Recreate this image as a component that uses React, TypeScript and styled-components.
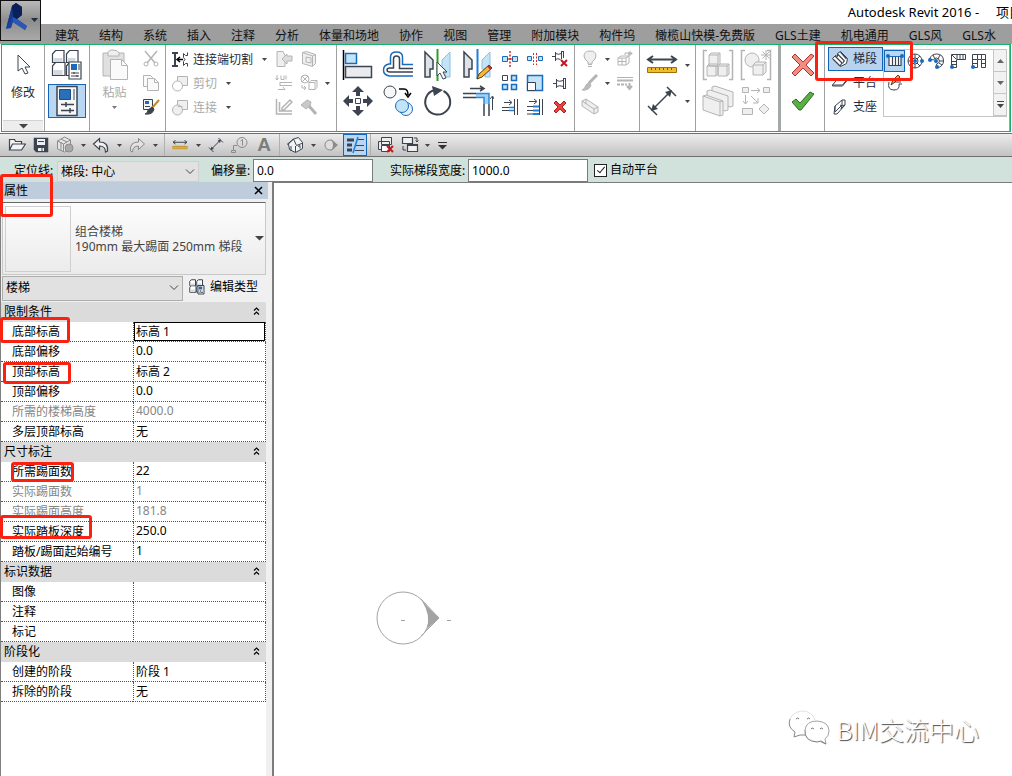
import React from "react";
import styled, { createGlobalStyle, css } from "styled-components";

const DARK = "#3b4450";
const BLUE = "#1b6bbd";
const PALE = "#c3e4f6";
const GREY = "#b4b4b4";
const FAINT = "#efefef";

const GlobalStyle = createGlobalStyle`
  *, *::before, *::after { box-sizing: border-box; }
  body {
    margin: 0;
    background: #fff;
    color: #000;
    font: 12px/16px "Noto Sans", "Noto Sans CJK SC", sans-serif;
  }
  button, input, select { font: inherit; color: inherit; margin: 0; }
`;

const Window = styled.div`
  position: relative;
  display: flex;
  flex-direction: column;
  min-height: 100vh;
  overflow: hidden;
`;

/* ---------- title and tabs ---------- */

const TitleBar = styled.header`
  display: flex;
  justify-content: flex-end;
  height: 24px;
  padding-top: 4px;
  overflow: hidden;
  white-space: pre;
`;

const Title = styled.h1`
  margin: 0 -10px 0 0;
  font-size: 13px;
  line-height: 16px;
  font-weight: 400;
  flex: none;
`;

const AppButton = styled.button`
  position: absolute;
  left: 0;
  top: 0;
  z-index: 2;
  width: 41px;
  height: 41px;
  padding: 0;
  border: 1px solid #111;
  background: linear-gradient(#b9b9b9, #8d8d8d 50%, #a9a9a9);
`;

const Tabs = styled.nav`
  display: flex;
  gap: 20px;
  height: 20px;
  padding: 4px 0 0 55px;
  background: #9e9e9e;
  white-space: nowrap;
  overflow: hidden;
`;

const Tab = styled.a`
  flex: none;
  color: #111;
  text-decoration: none;
`;

/* ---------- ribbon ---------- */

const Ribbon = styled.section`
  display: flex;
  height: 88px;
  margin: 0 1px 1px;
  border: 1px solid #17b06a;
`;

const Panel = styled.div<{ $w?: number; $thick?: boolean }>`
  display: flex;
  align-items: flex-start;
  padding-top: 2px;
  border-right: ${(p) => (p.$thick ? "3px solid #a3a9a6" : "1px solid #a0a0a0")};
  ${(p) => (p.$w ? css`flex: none; width: ${p.$w}px;` : css`flex: 1;`)}
`;

const Column = styled.div<{ $w?: number; $inset?: number }>`
  display: flex;
  flex-direction: column;
  flex: none;
  padding-left: ${(p) => p.$inset ?? 0}px;
  ${(p) => p.$w && css`width: ${p.$w}px;`}
`;

const Row = styled.div`
  display: flex;
  height: 24px;
`;

const Tool = styled.button<{ $w?: number; $h?: number; $on?: boolean }>`
  display: flex;
  align-items: center;
  justify-content: center;
  flex: none;
  width: ${(p) => p.$w ?? 24}px;
  height: ${(p) => p.$h ?? 24}px;
  padding: 0;
  border: ${(p) => (p.$on ? "1px solid #1464b8" : "0")};
  background: ${(p) => (p.$on ? "#b9d6f2" : "transparent")};
`;

const SheetButton = styled(Tool)`
  margin: 1px 3px 0;
`;

const WideTool = styled.button<{ $w?: number; $on?: boolean; $off?: boolean }>`
  display: flex;
  align-items: center;
  flex: none;
  gap: 4px;
  width: ${(p) => p.$w ?? 84}px;
  height: 24px;
  padding: 1px 0 0;
  border: 0;
  color: ${(p) => (p.$off ? "#a9a9a9" : "#1e2a38")};
  background: transparent;
  white-space: nowrap;
`;

const StairTool = styled(WideTool)`
  padding: 0 0 0 2px;
  border: 1px solid ${(p) => (p.$on ? "#1464b8" : "transparent")};
  background: ${(p) => (p.$on ? "#b9d2ee" : "transparent")};
`;

const BigTool = styled.button<{ $off?: boolean; $w: number }>`
  display: flex;
  flex-direction: column;
  align-items: center;
  gap: 4px;
  width: ${(p) => p.$w}px;
  height: 72px;
  padding: 2px 0 0;
  border: 0;
  background: transparent;
  color: ${(p) => (p.$off ? "#a9a9a9" : "#1e2a38")};
`;

const PanelFoot = styled.button`
  display: flex;
  align-items: center;
  justify-content: center;
  width: 40px;
  height: 11px;
  margin: 1px 0 0 1px;
  padding: 0;
  border: 0;
  border-top: 1px solid #d2d2d2;
  background: #ededed;
`;

const LargeGrid = styled.div<{ $w: number; $inset?: number }>`
  display: grid;
  padding-left: ${(p) => p.$inset ?? 0}px;
  grid-auto-flow: column;
  grid-template-rows: 36px 36px;
  grid-auto-columns: ${(p) => p.$w}px;
`;

const SmallGrid = styled.div<{ $w: number }>`
  display: grid;
  grid-auto-flow: column;
  grid-template-rows: 24px 24px 24px;
  grid-auto-columns: ${(p) => p.$w}px;
`;

const GeometryTools = styled(Column)`
  width: 106px;
  padding-left: 5px;
`;

const Gallery = styled.div`
  display: flex;
  width: 124px;
  height: 68px;
  margin: 2px 0 0;
  border: 1px solid #c6c6c6;
`;

const GalleryItems = styled.div`
  display: flex;
  flex-wrap: wrap;
  align-content: flex-start;
  flex: 1;
`;

const GalleryScroll = styled.div`
  display: flex;
  flex-direction: column;
  width: 13px;
`;

const ScrollButton = styled.button`
  display: flex;
  align-items: center;
  justify-content: center;
  flex: 1;
  padding: 0;
  border: 0;
  border-left: 1px solid #c6c6c6;
  border-bottom: 1px solid #c6c6c6;
  background: #f2f2f2;
`;

/* ---------- quick access and options ---------- */

const QuickBar = styled.div`
  display: flex;
  align-items: center;
  height: 24px;
  padding-left: 5px;
  border-top: 1px solid #6f6f6f;
  border-bottom: 1px solid #6f6f6f;
  background: linear-gradient(#ececec, #c2c2c2);
`;

const Divider = styled.span`
  width: 1px;
  height: 22px;
  margin: 0 3px;
  background: #b0b0b0;
`;

const LetterA = styled.span`
  font: 700 19px/20px "Liberation Sans", sans-serif;
  color: #7d7d7d;
`;

const OptionsBar = styled.form`
  display: flex;
  align-items: flex-end;
  height: 25px;
  padding-left: 14px;
  background: #d1e1db;
  white-space: nowrap;
`;

const OptionLabel = styled.label<{ $w: number }>`
  flex: none;
  width: ${(p) => p.$w}px;
  height: 19px;
`;

const Spacer = styled.span<{ $w: number }>`
  flex: none;
  width: ${(p) => p.$w}px;
`;

const NumberBox = styled.input`
  flex: none;
  width: 120px;
  height: 23px;
  padding: 0 3px;
  border: 1px solid #7a7a7a;
  background: #fff;
`;

const SelectBox = styled.span<{ $w: number; $h: number; $edge: string }>`
  display: grid;
  flex: none;
  align-items: center;
  width: ${(p) => p.$w}px;
  height: ${(p) => p.$h}px;
  border: 1px solid ${(p) => p.$edge};
  background: #e1e1e1;
  & > * { grid-area: 1 / 1; }
  select {
    appearance: none;
    width: 100%;
    padding: 0 3px;
    border: 0;
    background: transparent;
    outline: 0;
  }
  svg { justify-self: end; margin-right: 3px; pointer-events: none; }
`;

const CheckLabel = styled.label`
  display: flex;
  align-items: center;
  gap: 3px;
  height: 24px;
  margin-left: 6px;
`;

const CheckBox = styled.input`
  appearance: none;
  width: 13px;
  height: 13px;
  border: 1px solid #222;
  background: #fff;
  &:checked::before {
    content: "";
    display: block;
    width: 4px;
    height: 8px;
    margin: 0 0 0 4px;
    border: solid #222;
    border-width: 0 1px 1px 0;
    transform: rotate(40deg);
  }
`;

/* ---------- properties palette ---------- */

const Workspace = styled.main`
  display: flex;
  flex: 1;
`;

const Palette = styled.aside`
  flex: none;
  width: 272px;
  padding-right: 4px;
  border-left: 1px solid #7f7f7f;
  background: #f0f0f0;
  display: flex;
  flex-direction: column;
`;

const PaletteHead = styled.div`
  display: flex;
  justify-content: space-between;
  align-items: center;
  height: 17px;
  padding: 0 3px;
  background: #bfccdb;
`;

const PaletteTitle = styled.h2`
  margin: 0;
  font-size: 12px;
  line-height: 16px;
  font-weight: 400;
`;

const CloseButton = styled.button`
  padding: 0;
  border: 0;
  margin-right: 2px;
  background: transparent;
  line-height: 0;
`;

const TypeSelector = styled.button`
  display: flex;
  align-items: center;
  height: 73px;
  margin: 3px 2px 0 1px;
  padding: 0 1px 0 2px;
  border: 1px solid #c8c8c8;
  border-top: 1px solid #666;
  background: linear-gradient(#fdfdfd, #ebebeb);
  text-align: left;
  color: #444;
`;

const Thumb = styled.span`
  width: 66px;
  height: 66px;
  margin-right: 4px;
  border: 1px solid #cfcfcf;
`;

const TypeName = styled.span`
  flex: 1;
  white-space: nowrap;
  line-height: 15px;
`;

const FilterRow = styled.div`
  display: flex;
  align-items: center;
  gap: 6px;
  height: 27px;
  padding: 0 0 1px 1px;
`;

const EditType = styled.button`
  display: flex;
  align-items: center;
  gap: 5px;
  height: 24px;
  padding: 0 0 2px;
  border: 0;
  background: transparent;
  white-space: nowrap;
`;

const Sheet = styled.div`
  flex: 1;
  margin-right: 2px;
  background: #fff;
`;

const Props = styled.table`
  width: 100%;
  border-spacing: 0;
  table-layout: fixed;
`;

const GroupHead = styled.th`
  height: 20px;
  padding: 0 6px 0 3px;
  background: #dbdbdb;
  text-align: left;
  font-weight: 400;
  line-height: 18px;
  div { display: flex; justify-content: space-between; align-items: center; }
  button { padding: 0 0 2px; border: 0; background: transparent; line-height: 0; }
`;

const Name = styled.th<{ $off?: boolean }>`
  height: 20px;
  padding: 0 0 0 11px;
  border-bottom: 1px dotted #555;
  text-align: left;
  font-weight: 400;
  line-height: 18px;
  white-space: nowrap;
  color: ${(p) => (p.$off ? "#858585" : "#000")};
`;

const Value = styled.td`
  height: 20px;
  padding: 0;
  border: dotted #555;
  border-width: 0 1px 1px 1px;
`;

const ValueBox = styled.input<{ $focus?: boolean }>`
  display: block;
  width: 100%;
  height: 19px;
  padding: 0 1px 2px;
  border: 1px solid ${(p) => (p.$focus ? "#000" : "transparent")};
  background: transparent;
  outline: 0;
  &:disabled { color: #858585; }
`;

/* ---------- canvas ---------- */

const Canvas = styled.section`
  position: relative;
  flex: 1;
  border-left: 2px solid #7c7c7c;
  border-top: 1px solid #7c7c7c;
  background: #fff;
`;

const Elevation = styled.svg`
  position: absolute;
  left: 101px;
  top: 406px;
`;

const Watermark = styled.div`
  position: absolute;
  right: 33px;
  bottom: 28px;
  display: flex;
  align-items: center;
  gap: 6px;
  font-family: "Noto Sans CJK SC", sans-serif;
  font-size: 25px;
  line-height: 36px;
  font-weight: 300;
  color: #fff;
  text-shadow: 1px 1px 1px #444;
  white-space: nowrap;
`;

const Mark = styled.span<{ $x: number; $y: number; $w: number; $h: number }>`
  position: absolute;
  z-index: 3;
  left: ${(p) => p.$x}px;
  top: ${(p) => p.$y}px;
  width: ${(p) => p.$w}px;
  height: ${(p) => p.$h}px;
  border: 3px solid #fc2010;
  border-radius: 3px;
  pointer-events: none;
`;

/* ---------- icons ---------- */

type IconProps = { w?: number; h?: number; c?: string; children: React.ReactNode };
const Icon = ({ w = 18, h = 18, c = DARK, children }: IconProps) => (
  <svg width={w} height={h} viewBox={`0 0 ${w} ${h}`} fill="none" stroke={c} aria-hidden="true">
    {children}
  </svg>
);

const Caret = ({ c = "#444", big = false }: { c?: string; big?: boolean }) => (
  <Icon w={9} h={5} c="none">
    <path d={big ? "M0 0h9L4.500 4.500z" : "M2 1h5L4.500 4z"} fill={c} />
  </Icon>
);

const Chevron = () => (
  <Icon w={10} h={6} c="#444"><path d="M1 .5l4 4 4-4" /></Icon>
);

const Logo = () => (
  <Icon w={39} h={39} c="none">
    <path d="M11 5l4-3 6 4v8l-5 4 10 7-2 4-12-8-2 6-5 1z" fill="#1a43a0" />
    <path d="M11 5l4-3 1 9-5 5-6 12z" fill="#16398f" />
    <path d="M11 5l4-3 6 4v8l-5 4-4-2z" fill="#0b1f58" />
    <path d="M12 16l14 9-2 4-12-8z" fill="#2a58b4" />
    <path d="M30 17h7l-3.500 4z" fill="#222b3a" />
  </Icon>
);

const Arrow = () => (
  <Icon w={24} h={32}>
    <path d="M7 6v16l4-3 3 6 3-1-3-6h5z" fill="#fff" />
  </Icon>
);

const Families = ({ s = 1 }: { s?: number }) => (
  <svg width={32 * s} height={32 * s} viewBox="0 0 32 32" fill="#fff" stroke={DARK} strokeWidth={s < 1 ? 2 : 1.200} aria-hidden="true">
    <path d="M1.500 5l3-3.500H13v12H1.500zM15.500 5l3-3.500H27v12H15.500z" />
    <path d="M1.500 17l3-3.500H14v13H1.500zM15.500 17l3-3.500H22v13h-6.500z" />
    <path d="M2.500 9h9v4h-9zM16.500 9h8v4h-8zM2.500 21h9v5h-9z" fill="#d5d9de" stroke="none" />
    <path d="M18 13h12v17H18z" />
    <path d="M20 15h6v6h-6z" fill={BLUE} stroke="none" />
    <path d="M28 15v6M20 24h8M20 27h8" strokeWidth="1" />
    <path d="M23 23v2M26 26v2" />
  </svg>
);

const PropertySheet = () => (
  <Icon w={28} h={32}>
    <path d="M4 1.500h20v29H4z" fill="#f7f7f7" strokeWidth="1.500" />
    <path d="M6.500 4.500h11v10h-11z" fill="#2a70b8" stroke="#174e8c" />
    <path d="M20 4h2v11h-2z" fill="#9aa3ab" stroke="none" />
    <path d="M8 19.500h13M13 17v5M8 25.500h13M17 23v5" strokeWidth="1.500" />
  </Icon>
);

const Paste = () => (
  <Icon w={28} h={32} c={GREY}>
    <path d="M2 4h21v23H2z" fill="#e0e0e0" />
    <path d="M7 4q0-3 5-3t6 3v3H7z" fill={FAINT} />
    <path d="M9.500 10.500h11l6 6v14h-17z" fill="#fafafa" />
    <path d="M20.500 10.500v6h6" />
  </Icon>
);

const Scissors = () => (
  <Icon c={GREY}>
    <path d="M3 1l10 12M15 1L5 13" strokeWidth="1.500" />
    <circle cx="4" cy="14" r="2" /><circle cx="14" cy="14" r="2" />
  </Icon>
);
const Copy = () => (
  <Icon c={GREY}>
    <path d="M1.500 1.500h7l2 2v9h-9z" fill="#fafafa" />
    <path d="M5.500 4.500h7l4 4v8h-11zM12.500 4.500v4h4" fill="#fafafa" />
  </Icon>
);
const MatchBrush = () => (
  <Icon>
    <path d="M1.500 1.500h9v10h-9z" fill="#f4f4f4" />
    <path d="M3 3h4v3H3z" fill={BLUE} stroke="none" /><path d="M3 8.500h5" />
    <path d="M17 2l-7 8" stroke="#c58b2a" strokeWidth="2" />
    <path d="M10 9l2 2q-1 6-9 5 3-1 3-4z" fill={DARK} />
  </Icon>
);
const Cope = () => (
  <Icon>
    <path d="M1 2h6M1 15h6M4 2v13" strokeWidth="2" />
    <path d="M12 8.500H7M9 6L6 8.500 9 11" stroke="#000" strokeWidth="1.500" />
    <path d="M16.500 1.500v3h-2l-2-2v4l1.500 2-1.500 2v4l2-2h2v3" />
  </Icon>
);
const CutGeo = () => (
  <Icon c={GREY}>
    <path d="M6.500 1.500h10v9h-10z" fill={FAINT} /><circle cx="6.500" cy="11" r="5" fill="#fff" />
  </Icon>
);
const JoinGeo = () => (
  <Icon c={GREY}>
    <path d="M6.500 1.500h10v9h-10z" fill={FAINT} /><circle cx="6.500" cy="11" r="5" fill={FAINT} /><path d="M7 7.500h4.500" />
  </Icon>
);
const JoinRoof = () => (
  <Icon c={GREY}>
    <path d="M2 1.500h6l2 4v11H2z" fill={FAINT} /><path d="M17 6h-5V4L7 9l5 5v-3h5z" fill="#ddd" />
  </Icon>
);
const WallJoin = () => (
  <Icon c={GREY}>
    <path d="M2.500 2.500l4-1 9 3v9l-3 3-10-3z" fill={FAINT} /><path d="M6 7l5 1v5l-5-1zM2.500 2.500l10 3.500v10M12.500 6l3-1.500" />
  </Icon>
);
const Beam = () => (
  <Icon c={GREY}><path d="M2 1v5M.5 4L2 6l1.500-2M6 1.500v4h3v-4M11 1.500v4M5 8.500h12M5 11.500h12M5 8v4M3 15.500h7M8 13l2 2.500" /></Icon>
);
const SplitFace = () => (
  <Icon c={GREY}><circle cx="5" cy="5" r="4" /><path d="M2 2l6 6M2 8l6-6M2 11v3h4M4 12l2 2-2 2M9 8.500l2-2h6v7l-2 2H9zM9 8.500h6v7M15 8.500l2-2" /></Icon>
);
const Paint = () => (
  <Icon c={GREY}><path d="M1.500 1v15H17M4.500 4v9H17M7 10l8-8 2 2-8 8H7z" strokeWidth="1.500" /></Icon>
);
const Hammer = () => (
  <Icon c={GREY}><path d="M1 7l6-5 4 2-1 4-4 3z" fill="#c8c8c8" /><path d="M9 8l7 8" strokeWidth="3" /></Icon>
);

const Align = () => (
  <Icon w={32} h={32}>
    <path d="M1.500 1v30" stroke="#000" strokeWidth="1.500" />
    <path d="M3.500 4.500h11v10h-11z" fill={PALE} stroke={BLUE} strokeWidth="1.500" />
    <path d="M3.500 17.500h26v11h-26z" fill="#e9ebef" strokeWidth="1.500" />
  </Icon>
);
const Offset = () => (
  <Icon w={32} h={32}>
    <path d="M31 15.500H20.500V8q0-5-6-5t-6 5v7H7q-5.500 1-5.500 6t6 6H31" stroke={BLUE} strokeWidth="1.500" />
    <path d="M31 19.500H17.500V10q0-3-3-3t-3 3v9H8q-3 0-3 2t3 2h23" strokeWidth="1.500" />
  </Icon>
);
const MirrorPick = () => (
  <Icon w={32} h={32}>
    <path d="M3 3l8 8v9H8v8H3z" fill="#dfe2e6" strokeWidth="1.500" />
    <path d="M28 3l-8 8v9h3v8h5z" fill={PALE} stroke="#8dbedf" />
    <path d="M15.500 0v32" stroke="#2e9b2e" strokeWidth="2" />
    <path d="M15 13v14l3-3 3 6 3-1-3-6h4z" fill="#fff" />
  </Icon>
);
const MirrorDraw = () => (
  <Icon w={32} h={32}>
    <path d="M2 3l8 8v9H7v8H2z" fill="#dfe2e6" strokeWidth="1.500" />
    <path d="M28 3l-8 8v9h3v8h5z" fill={PALE} stroke="#8dbedf" />
    <path d="M15.500 0v30" stroke="#1d7fd8" strokeWidth="2" />
    <path d="M15 30l2-5 10-9 3 3-10 9z" fill="#f5b63a" stroke="#5b3c0d" />
    <path d="M26 17l3 3" stroke="#b24" strokeWidth="2" />
  </Icon>
);
const Move = () => (
  <Icon w={32} h={32}>
    <path d="M13.500 13.500h5v5h-5z" fill="#fff" />
    <path d="M16 1l6 6h-4v4h-4V7h-4zM16 31l6-6h-4v-4h-4v4h-4zM1 16l6-6v4h4v4H7v4zM31 16l-6-6v4h-4v4h4v4z" fill={DARK} stroke="none" />
  </Icon>
);
const CopyTool = () => (
  <Icon w={32} h={32}>
    <circle cx="8" cy="7" r="6" fill="#f7f7f7" />
    <path d="M17 4h5q4 0 4 6M23 8l3 4 3-4" stroke="#000" strokeWidth="1.500" />
    <circle cx="24" cy="24" r="6.500" fill="#e3f2fb" stroke={BLUE} />
    <circle cx="20" cy="21" r="6.500" fill={PALE} stroke={BLUE} />
  </Icon>
);
const Rotate = () => (
  <Icon w={32} h={32}>
    <path d="M21.500 6a12.500 12.500 0 1 1-9-1" strokeWidth="2" />
    <path d="M10 1l11 4-9 6z" fill={DARK} stroke="none" />
  </Icon>
);
const Trim = () => (
  <Icon w={32} h={32}>
    <path d="M8 3.500h13M18 1l4 2.500L18 6M1 8.500h13M1 12.500h13M22 19v12M27 19v12" strokeWidth="1.500" />
    <path d="M14 8h13v11h-5v-6h-8z" fill="#9fd2f4" stroke="none" />
    <path d="M14 8.500h13V19M14 12.500h8V19" stroke="#2b8ae0" strokeWidth="1.500" />
    <path d="M30.500 25V12M28 14l2.500-3 1.500 3" />
  </Icon>
);
const Split = () => (
  <Icon><path d="M1.500 6.500h5v5h-5zM11.500 6.500h5v5h-5z" fill={PALE} stroke={BLUE} /><path d="M6 9h6" stroke="#a11" /><path d="M9 1v16" stroke="#d22" strokeWidth="1.500" strokeDasharray="2 1.500" /></Icon>
);
const SplitGap = () => (
  <Icon><path d="M1.500 6.500h4v4h-4zM12.500 6.500h4v4h-4z" fill={PALE} stroke={BLUE} /><path d="M7.500 3v12M10.500 3v12" stroke="#d22" strokeDasharray="2 1.500" /></Icon>
);
const Pin = () => (
  <Icon><path d="M2 9.500h3M5.500 5v9M5.500 6.500q3 1.500 7 0M5.500 12.500q3-1.500 7 0M12.500 4v11M14.500 4v11M12.500 4.500h2M12.500 14.500h2" /></Icon>
);
const Unpin = () => (
  <Icon><path d="M1 6.500h3M4.500 2v9M4.500 3.500q3 1.500 6 0M4.500 9.500q2-1.500 5 0M10.500 1v8M12.500 1v7M10.500 1.500h2" /><path d="M10 10l6 6M16 10l-6 6" stroke="#c4161c" strokeWidth="2" /></Icon>
);
const ArrayTool = () => (
  <Icon><path d="M1.500 1.500h5v5h-5z" fill="#fff" /><path d="M10.500 1.500h5v5h-5zM1.500 10.500h5v5h-5zM10.500 10.500h5v5h-5z" fill={PALE} stroke={BLUE} strokeWidth="1.500" /></Icon>
);
const Scale = () => (
  <Icon><path d="M1.500 1.500h15v15h-15z" fill={PALE} stroke={BLUE} strokeWidth="1.500" /><path d="M1.500 8.500h8v8h-8z" fill="#fff" /></Icon>
);
const TrimOne = () => (
  <Icon><path d="M3 4.500h7M8 2l3 2.500L8 7M1 9.500h7M1 12.500h7M13.500 1v16M16.500 1v16" /><path d="M8 9.500h5M8 12.500h5" stroke="#1d7fd8" strokeWidth="1.500" /></Icon>
);
const TrimMany = () => (
  <Icon><path d="M3 3.500h7M8 1l3 2.500L8 6M1 8.500h6M1 12.500h6M1 16h6M13.500 1v16M16.500 1v16" /><path d="M7 8.500h6M7 12.500h6M7 16h6" stroke="#1d7fd8" strokeWidth="2" /></Icon>
);
const RedX = () => (
  <Icon><path d="M3 5l2-2 4 4 4-4 2 2-4 4 4 4-2 2-4-4-4 4-2-2 4-4z" fill="#e8443c" stroke="#b3201c" /></Icon>
);

const Bulb = () => (
  <Icon c={GREY}><path d="M7 12q-4-3-4-6 0-5 6-5t6 5q0 3-4 6v2H7z" fill={FAINT} /><path d="M7 14.500h4M7 16.500h4" /></Icon>
);
const Brush = () => (
  <Icon c={GREY}><path d="M16 1l-8 8" strokeWidth="3" /><path d="M8 8l2 3q-2 6-9 5 3-1 4-5z" fill="#bbb" /></Icon>
);
const BoxTool = () => (
  <Icon c={GREY}><path d="M1 3l4-2 12 8v5l-4 2L1 8zM1 3l12 8v5M13 11l4-2M5 1v5" fill={FAINT} /></Icon>
);
const Displace = () => (
  <Icon c={GREY}><path d="M2 8l3-2h8v7l-3 2H2zM2 8h8v7M10 8l3-2M6 8v7M2 11.500h8M9 5V3h4v3M14 1v5M11.500 3.500h5M12.500 2l3 3M15.500 2l-3 3" /></Icon>
);
const LineWeight = () => (
  <Icon c={GREY}><path d="M1 3.500h16" /><path d="M1 6.500h16" strokeWidth="2" /><path d="M1 10.500h10" strokeDasharray="3 1" strokeWidth="2" /><path d="M13.500 9v6M11 12l2.500 3 2.500-3" strokeWidth="2" /></Icon>
);
const Measure = ({ s = 1 }: { s?: number }) => (
  <svg width={32 * s} height={24 * s} viewBox="0 0 32 24" fill="none" stroke={DARK} aria-hidden="true">
    <path d="M2 6.500h28M7 3L2 6.500 7 10M25 3l5 3.500-5 3.500" strokeWidth="2" />
    <path d="M1.500 14.500h29v5h-29z" fill="#f2bd2c" stroke="#a06f10" />
    <path d="M5.500 15v2M9.500 15v2M13.500 15v2M17.500 15v2M21.500 15v2M25.500 15v2" stroke="#7c5408" />
  </svg>
);
const Dimension = ({ s = 1 }: { s?: number }) => (
  <svg width={32 * s} height={32 * s} viewBox="0 0 32 32" fill="none" stroke={DARK} strokeWidth={s < 1 ? 2 : 1.500} aria-hidden="true">
    <path d="M6 25L25 6M2 21l9 9M21 2l9 9" />
    <path d="M5 26l2-7 5 5zM26 5l-7 2 5 5z" fill={DARK} stroke="none" />
  </svg>
);
const Brackets = <path d="M5 1.500H1.500v29H5M27 1.500h3.500v29H27" strokeWidth="1.500" />;
const Assembly = () => (
  <Icon w={32} h={32} c={GREY}>{Brackets}<path d="M7 6l2-2h9v11l-2 2H7zM5 17l2-2h9v10l-2 2H5zM16 17l2-2h9v10l-2 2h-9z" fill={FAINT} /><path d="M7 6h9v9M16 6l2-2M5 17h9v10M14 17l2-2M16 17h9v10M25 17l2-2" /></Icon>
);
const Group = () => (
  <Icon w={32} h={32} c={GREY}>{Brackets}<circle cx="12" cy="11" r="7" fill={FAINT} /><path d="M13 16l3-3h10v10l-3 3H13zM13 16h10v10M23 16l3-3" fill={FAINT} /><path d="M26 1v10M21 6h10M22.500 2.500l7 7M29.500 2.500l-7 7" /></Icon>
);
const Parts = () => (
  <Icon w={32} h={32} c={GREY}><path d="M10 2l3-1 18 6v14l-3 1L10 16z" fill={FAINT} /><path d="M5 6l3-1 18 6v14l-3 1L5 20z" fill={FAINT} /><path d="M1 11l3-1 17 6v14l-3 1L1 25zM1 11l17 6v14M18 17l3-1" fill={FAINT} /></Icon>
);
const Similar = () => (
  <Icon w={32} h={32} c={GREY}><path d="M2.500 2.500h6v5h-6zM23.500 2.500h6v5h-6zM2.500 23.500h10v6h-10zM24 19l5 5-5 5-5-5z" fill={FAINT} /><path d="M11 5.500h9M17 3l3 2.500L17 8M5.500 10v9M3 16l2.500 3L8 16M11 11l7 7M18 13v5h-5" /></Icon>
);
const Cancel = () => (
  <Icon w={24} h={24} c="#a8342d"><path d="M1 4l3-3 8 8 8-8 3 2-8 9 8 8-3 3-8-8-8 8-3-3 8-8z" fill="#f28b82" /></Icon>
);
const Finish = () => (
  <Icon w={24} h={24} c="#2f6b22"><path d="M1 13l4-3 4 4L19 3l4 2L10 21H8z" fill="#57b043" /></Icon>
);
const Stairs = () => (
  <Icon><path d="M1.500 8.500l3-3 2 1 0-3 3-2 7 7-1 5-6 3z" fill="#fff" /><path d="M4 6l7 7M6.500 4l7 7M2 9l7 7M9.500 2l6 7M9 16l2-3M11.500 13.500l2-3" strokeWidth="1.200" /></Icon>
);
const Landing = () => <Icon><path d="M6.500 5h10l-5 6h-10zM1.500 11v1h10l5-6" fill="#fff" /></Icon>;
const Support = () => (
  <Icon><path d="M4 8l7-6 3 0v5l-8 9H3zM4 8v6M9 7l2 1-1 3 3-3M11 2v5l-7 7M14 7l-4 1" fill="#fff" /></Icon>
);
const dot = (x: number, y: number) => <circle cx={x} cy={y} r="2" fill={BLUE} stroke="none" />;
const RunStraight = () => (
  <Icon><path d="M3 4.500h12v9H3zM6.500 5v8M9.500 5v8M12.500 5v8" fill="#fff" strokeWidth="1.200" /><path d="M1 4.500h16" stroke={BLUE} />{dot(2, 4)}{dot(16, 4)}</Icon>
);
const RunSpiral = () => (
  <Icon><circle cx="8" cy="9" r="7" /><circle cx="8" cy="9" r="3" /><path d="M8 2v4M1 9h4M3 4l3 3M13 4l-3 3M3 14l3-3M13 14l-3-3M8 16v-4" />{dot(8, 9)}{dot(15, 9)}</Icon>
);
const RunArc = () => (
  <Icon><path d="M1.500 7q2-5 7-5 7 0 7 7 0 5-6 7l-1-4q3-1 3-3t-3-3q-2 0-3 2zM5 3l2 4M12 3l-2 4M16 9h-4M14 13l-3-2" />{dot(8, 9)}{dot(2, 8)}{dot(9, 15)}</Icon>
);
const RunL = () => (
  <Icon><path d="M2.500 2.500h14v5H7.500v8h-5zM8 3v4M11 3v4M14 3v4M3 9.500h4M3 12.500h4M3 3l4 4" />{dot(3, 15)}</Icon>
);
const RunU = () => (
  <Icon><path d="M2.500 2.500h13v13h-4v-8h-4v8h-5zM7.500 3v4M11.500 3v4M3 7.500h4M3 11.500h4M12 7.500h4M12 11.500h4" />{dot(3, 15)}</Icon>
);
const Sketch = () => (
  <Icon w={16}><path d="M2 8q-2 8 5 8 6 0 5-6h3M8 8h6" /><path d="M4 11l2-5 5-5 2 2-5 5z" fill="#f3a93a" stroke="#5b3c0d" /></Icon>
);

const Folder = () => <Icon><path d="M1.500 14V3.500h5l1 2h6V8M1.500 14l3-6h13l-4 6z" fill="#f4f4f4" strokeWidth="1.200" /></Icon>;
const Save = () => (
  <Icon><path d="M2.500 2.500h13v13h-11l-2-2z" fill={DARK} strokeWidth="1.500" /><path d="M5 3h8v6H5zM6 12h6v3H6z" fill="#eef0f3" stroke="none" /><path d="M10 12v3M6 5.500h6" /></Icon>
);
const Sync = () => (
  <Icon c="#8b8b8b"><path d="M1.500 5l7-4 6 3v8l-6 4-7-3zM1.500 5l6 3v8M7.500 8l7-4M5 3l6 3M5 6v8" fill="#e4e4e4" /><circle cx="13" cy="12" r="4" fill="#a8a8a8" /></Icon>
);
const Undo = () => <Icon><path d="M1.500 8l6-5.500v3.500q9 0 8 9l-2 1q0-6-6-6v3.500z" fill="#f2f2f2" strokeWidth="1.200" /></Icon>;
const Redo = () => <Icon c="#888"><path d="M16.500 8l-6-5.500v3.500q-9 0-8 9l2 1q0-6 6-6v3.500z" fill="#e2e2e2" /></Icon>;
const Tag = () => <Icon c="#8b8b8b"><circle cx="11" cy="6.500" r="5" /><path d="M9.500 5l2-1.500v6M6 9.500H2.500V14M.5 14.500h4v2h-4z" /></Icon>;
const Home = () => (
  <Icon><path d="M2.500 8l5-5 5-1.500 4 5v6l-7 4-6-3z" fill="#f3f4f6" /><path d="M1 8.500L7.500 3l3 6.500L17 7M9.500 10v6M5 10v5M12 10.500l2-1v3" /></Icon>
);
const Section = () => <Icon c="#8b8b8b"><circle cx="8" cy="9" r="5" fill="#ddd" /><path d="M9 3l7 6-7 6q4-6 0-12z" fill="#8b8b8b" stroke="none" /></Icon>;
const ThinLines = () => (
  <Icon><path d="M1 4h7M1 9h5M1 14h5" strokeWidth="3" /><path d="M12 3.500h6M10 9.500h8M9 14.500h9" /><path d="M12 1L7 17" stroke="#1d7fd8" strokeWidth="1.500" /></Icon>
);
const CloseHidden = () => (
  <Icon><path d="M4.500 1.500h10v7h-10zM1.500 5.500h11v8h-11z" fill="#eee" /><path d="M4.500 9.500h8v6h-8z" fill="#fff" /><path d="M10 10l6 6M16 10l-6 6" stroke="#c4161c" strokeWidth="2" /></Icon>
);
const SwitchWin = () => (
  <Icon><path d="M1.500 1.500h10v6h-10zM6.500 8.500h10v7h-10z" fill="#f0f0f0" strokeWidth="1.200" /><path d="M6 9.500h11M13 2h3v4M14.500 4.500L16 6l1.500-1.500M2 10v4h3" /></Icon>
);
const Collapse = () => <Icon w={7} h={8} c="#000"><path d="M1 3.500l2.500-2.500L6 3.500M1 7.500l2.500-2.500L6 7.500" strokeWidth="1.200" /></Icon>;
const CloseMark = () => <Icon w={9} h={9} c="#000"><path d="M1 1l7 7M8 1L1 8" strokeWidth="1.500" /></Icon>;

const WeChat = () => (
  <svg width="42" height="38" viewBox="0 0 42 38" fill="#fff" stroke="#a5a5a5" aria-hidden="true">
    <path d="M2 9q3-7 12-8 10 0 13 9" stroke="#e2e2e2" />
    <path d="M2 9q-3 8 5 13l-1 5 6-2h5" stroke="#888" />
    <path d="M17 20q1-9 12-9 12 1 12 10 0 5-4 8l1 5-5-2" />
    <path d="M17 20q-1 11 12 12l4-1 5 3" stroke="#777" fill="none" />
    <path d="M8 9q2-2 3 0M19 9q2-2 3 0M23 19q1-2 3 0M32 19q1-2 3 0" stroke="#777" />
  </svg>
);

/* ---------- data ---------- */

const tabs = ["建筑", "结构", "系统", "插入", "注释", "分析", "体量和场地", "协作", "视图", "管理", "附加模块", "构件坞", "橄榄山快模-免费版", "GLS土建", "机电通用", "GLS风", "GLS水"];

type Prop = { name: string; value: string; off?: boolean; focus?: boolean };
const groups: { title: string; rows: Prop[] }[] = [
  {
    title: "限制条件",
    rows: [
      { name: "底部标高", value: "标高 1", focus: true },
      { name: "底部偏移", value: "0.0" },
      { name: "顶部标高", value: "标高 2" },
      { name: "顶部偏移", value: "0.0" },
      { name: "所需的楼梯高度", value: "4000.0", off: true },
      { name: "多层顶部标高", value: "无" },
    ],
  },
  {
    title: "尺寸标注",
    rows: [
      { name: "所需踢面数", value: "22" },
      { name: "实际踢面数", value: "1", off: true },
      { name: "实际踢面高度", value: "181.8", off: true },
      { name: "实际踏板深度", value: "250.0" },
      { name: "踏板/踢面起始编号", value: "1" },
    ],
  },
  {
    title: "标识数据",
    rows: [
      { name: "图像", value: "" },
      { name: "注释", value: "" },
      { name: "标记", value: "" },
    ],
  },
  {
    title: "阶段化",
    rows: [
      { name: "创建的阶段", value: "阶段 1" },
      { name: "拆除的阶段", value: "无" },
    ],
  },
];

type ToolDef = [string, React.ComponentType];
const largeTools: ToolDef[] = [["对齐", Align], ["移动", Move], ["偏移", Offset], ["复制", CopyTool], ["镜像拾取轴", MirrorPick], ["旋转", Rotate], ["镜像绘制轴", MirrorDraw], ["修剪延伸为角", Trim]];
const smallTools: ToolDef[] = [["拆分图元", Split], ["阵列", ArrayTool], ["修剪单个", TrimOne], ["间隙拆分", SplitGap], ["缩放", Scale], ["修剪多个", TrimMany], ["解锁", Unpin], ["锁定", Pin], ["删除", RedX]];
const createTools: ToolDef[] = [["部件", Assembly], ["零件", Parts], ["组", Group], ["类似实例", Similar]];
const runTools: ToolDef[] = [["直梯", RunStraight], ["全踏步螺旋", RunSpiral], ["圆心端点螺旋", RunArc], ["L形转角", RunL], ["U形转角", RunU], ["创建草图", Sketch]];

const DropTool = ({ label, w = 12 }: { label: string; w?: number }) => (
  <Tool $w={w} aria-label={label + "选项"}><Caret /></Tool>
);
const QTool = ({ label, on, children }: { label: string; on?: boolean; children: React.ReactNode }) => (
  <Tool $on={on} $h={22} aria-label={label}>{children}</Tool>
);

export default function App() {
  return (
    <Window>
      <GlobalStyle />
      <AppButton aria-label="应用程序菜单"><Logo /></AppButton>
      <TitleBar><Title>{"Autodesk Revit 2016 -     项目"}</Title></TitleBar>
      <Tabs>{tabs.map((t) => <Tab key={t} href="#">{t}</Tab>)}</Tabs>

      <Ribbon>
        <Panel $w={43}>
          <Column>
            <BigTool $w={42}><Arrow /><span>修改</span></BigTool>
            <PanelFoot aria-label="选择"><Caret big /></PanelFoot>
          </Column>
        </Panel>
        <Panel $w={45}>
          <Column $w={44}>
            <Tool $w={44} $h={36} aria-label="族类型"><Families /></Tool>
            <SheetButton $w={38} $h={34} $on aria-label="属性"><PropertySheet /></SheetButton>
          </Column>
        </Panel>
        <Panel $w={76}>
          <BigTool $w={49} $off><Paste /><span>粘贴</span><Caret c="#777" /></BigTool>
          <SmallGrid $w={24}>
            <Tool aria-label="剪切到剪贴板"><Scissors /></Tool>
            <Tool aria-label="复制到剪贴板"><Copy /></Tool>
            <Tool aria-label="匹配类型"><MatchBrush /></Tool>
          </SmallGrid>
        </Panel>
        <Panel $w={171}>
          <GeometryTools>
            <Row><WideTool><Cope />连接端切割</WideTool><DropTool label="连接端切割" w={18} /></Row>
            <Row><WideTool $off $w={48}><CutGeo />剪切</WideTool><DropTool label="剪切" w={18} /></Row>
            <Row><WideTool $off $w={48}><JoinGeo />连接</WideTool><DropTool label="连接" w={18} /></Row>
          </GeometryTools>
          <SmallGrid $w={25}>
            <Tool aria-label="连接屋顶"><JoinRoof /></Tool>
            <Tool aria-label="梁柱连接"><Beam /></Tool>
            <Tool aria-label="填色"><Paint /></Tool>
            <Tool aria-label="墙连接"><WallJoin /></Tool>
            <Tool aria-label="拆分面"><SplitFace /></Tool>
            <Tool aria-label="拆除"><Hammer /></Tool>
          </SmallGrid>
          <Column><Row /><DropTool label="拆分面" w={10} /></Column>
        </Panel>
        <Panel $w={238}>
          <LargeGrid $w={40} $inset={1}>{largeTools.map(([n, I]) => <Tool key={n} $w={40} $h={36} aria-label={n}><I /></Tool>)}</LargeGrid>
          <SmallGrid $w={25}>{smallTools.map(([n, I]) => <Tool key={n} aria-label={n}><I /></Tool>)}</SmallGrid>
        </Panel>
        <Panel $w={65}>
          <Column $inset={3}>
            <Row><Tool aria-label="隐藏"><Bulb /></Tool><DropTool label="隐藏" w={10} /></Row>
            <Row><Tool aria-label="替换"><Brush /></Tool><DropTool label="替换" w={10} /></Row>
            <Row><Tool aria-label="选择框"><BoxTool /></Tool></Row>
          </Column>
          <Column $inset={1}>
            <Tool aria-label="置换图元"><Displace /></Tool>
            <Tool aria-label="线处理"><LineWeight /></Tool>
          </Column>
        </Panel>
        <Panel $w={56}>
          <Column $w={41}>
            <Tool $w={44} $h={36} aria-label="测量"><Measure /></Tool>
            <Tool $w={44} $h={36} aria-label="尺寸标注"><Dimension /></Tool>
          </Column>
          <Column>
            <Tool $w={12} $h={36} aria-label="测量选项"><Caret /></Tool>
            <Tool $w={12} $h={36} aria-label="尺寸标注选项"><Caret /></Tool>
          </Column>
        </Panel>
        <Panel $w={85} $thick>
          <LargeGrid $w={38} $inset={3}>{createTools.map(([n, I]) => <Tool key={n} $w={38} $h={36} aria-label={n}><I /></Tool>)}</LargeGrid>
        </Panel>
        <Panel $w={44}>
          <Column>
            <Tool $w={43} $h={36} aria-label="取消编辑模式"><Cancel /></Tool>
            <Tool $w={43} $h={36} aria-label="完成编辑模式"><Finish /></Tool>
          </Column>
        </Panel>
        <Panel>
          <Column $inset={3}>
            <StairTool $w={55} $on><Stairs />梯段</StairTool>
            <StairTool $w={55}><Landing />平台</StairTool>
            <StairTool $w={55}><Support />支座</StairTool>
          </Column>
          <Gallery>
            <GalleryItems>{runTools.map(([n, I], i) => <Tool key={n} $w={21} $h={22} $on={i === 0} aria-label={n}><I /></Tool>)}</GalleryItems>
            <GalleryScroll>
              <ScrollButton aria-label="上一行"><Icon w={7} h={4} c="none"><path d="M0 4h7L3.500 0z" fill="#666" /></Icon></ScrollButton>
              <ScrollButton aria-label="下一行"><Icon w={7} h={4} c="none"><path d="M0 0h7L3.500 4z" fill="#666" /></Icon></ScrollButton>
              <ScrollButton aria-label="更多"><Icon w={7} h={7} c="none"><path d="M0 0h7v1H0zM0 3h7L3.500 7z" fill="#444" /></Icon></ScrollButton>
            </GalleryScroll>
          </Gallery>
        </Panel>
      </Ribbon>

      <QuickBar>
        <QTool label="打开"><Folder /></QTool>
        <QTool label="保存"><Save /></QTool>
        <QTool label="同步"><Sync /></QTool>
        <DropTool label="同步" />
        <QTool label="放弃"><Undo /></QTool>
        <DropTool label="放弃" />
        <QTool label="重做"><Redo /></QTool>
        <DropTool label="重做" />
        <Divider />
        <QTool label="测量"><Measure s={0.5} /></QTool>
        <DropTool label="测量" />
        <QTool label="对齐尺寸标注"><Dimension s={0.5} /></QTool>
        <QTool label="按类别标记"><Tag /></QTool>
        <QTool label="文字"><LetterA>A</LetterA></QTool>
        <Divider />
        <QTool label="默认三维视图"><Home /></QTool>
        <DropTool label="默认三维视图" />
        <QTool label="剖面"><Section /></QTool>
        <QTool label="细线" on><ThinLines /></QTool>
        <Divider />
        <QTool label="关闭隐藏窗口"><CloseHidden /></QTool>
        <QTool label="切换窗口"><SwitchWin /></QTool>
        <DropTool label="切换窗口" w={10} />
        <Tool $w={20} $h={22} aria-label="自定义快速访问工具栏">
          <Icon w={9} h={9} c="none"><path d="M0 1h9v1H0zM0 4h9L4.500 8.500z" fill="#333" /></Icon>
        </Tool>
      </QuickBar>

      <OptionsBar onSubmit={(e) => e.preventDefault()}>
        <OptionLabel $w={43} htmlFor="locline">定位线:</OptionLabel>
        <SelectBox $w={142} $h={21} $edge="#cfcfcf">
          <select id="locline"><option>梯段: 中心</option></select>
          <Chevron />
        </SelectBox>
        <Spacer $w={12} />
        <OptionLabel $w={42} htmlFor="offset">偏移量:</OptionLabel>
        <NumberBox id="offset" defaultValue="0.0" />
        <Spacer $w={17} />
        <OptionLabel $w={78} htmlFor="runwidth">实际梯段宽度:</OptionLabel>
        <NumberBox id="runwidth" defaultValue="1000.0" />
        <CheckLabel><CheckBox type="checkbox" defaultChecked />自动平台</CheckLabel>
      </OptionsBar>

      <Workspace>
        <Palette>
          <PaletteHead>
            <PaletteTitle>属性</PaletteTitle>
            <CloseButton aria-label="关闭"><CloseMark /></CloseButton>
          </PaletteHead>
          <TypeSelector>
            <Thumb />
            <TypeName>组合楼梯<br />190mm 最大踢面 250mm 梯段</TypeName>
            <Caret big />
          </TypeSelector>
          <FilterRow>
            <SelectBox $w={181} $h={25} $edge="#adadad">
              <select aria-label="属性过滤器"><option>楼梯</option></select>
              <Chevron />
            </SelectBox>
            <EditType><Families s={0.5} />编辑类型</EditType>
          </FilterRow>
          <Sheet>
            <Props>
              <colgroup><col width="132" /><col /></colgroup>
              {groups.map((g) => (
                <tbody key={g.title}>
                  <tr>
                    <GroupHead colSpan={2} scope="rowgroup">
                      <div>{g.title}<button aria-label={"折叠" + g.title}><Collapse /></button></div>
                    </GroupHead>
                  </tr>
                  {g.rows.map((r) => (
                    <tr key={r.name}>
                      <Name scope="row" $off={r.off}>{r.name}</Name>
                      <Value><ValueBox aria-label={r.name} defaultValue={r.value} disabled={r.off} $focus={r.focus} /></Value>
                    </tr>
                  ))}
                </tbody>
              ))}
            </Props>
          </Sheet>
        </Palette>
        <Canvas>
          <Elevation width="80" height="56" viewBox="0 0 80 56" fill="none" stroke="#a3a3a3" aria-hidden="true">
            <circle cx="28" cy="29" r="26" />
            <path d="M47 12l17 17-12 11q4-14-5-28z" fill="#a3a3a3" stroke="none" />
            <path d="M46 10l18 19-18 18M26 31.500h4M72 31.500h4" />
          </Elevation>
          <Watermark><WeChat />BIM交流中心</Watermark>
        </Canvas>
      </Workspace>

      <Mark $x={0} $y={174} $w={53} $h={43} />
      <Mark $x={0} $y={317} $w={70} $h={26} />
      <Mark $x={3} $y={362} $w={68} $h={22} />
      <Mark $x={11} $y={462} $w={63} $h={20} />
      <Mark $x={0} $y={515} $w={92} $h={24} />
      <Mark $x={815} $y={41} $w={98} $h={40} />
    </Window>
  );
}
